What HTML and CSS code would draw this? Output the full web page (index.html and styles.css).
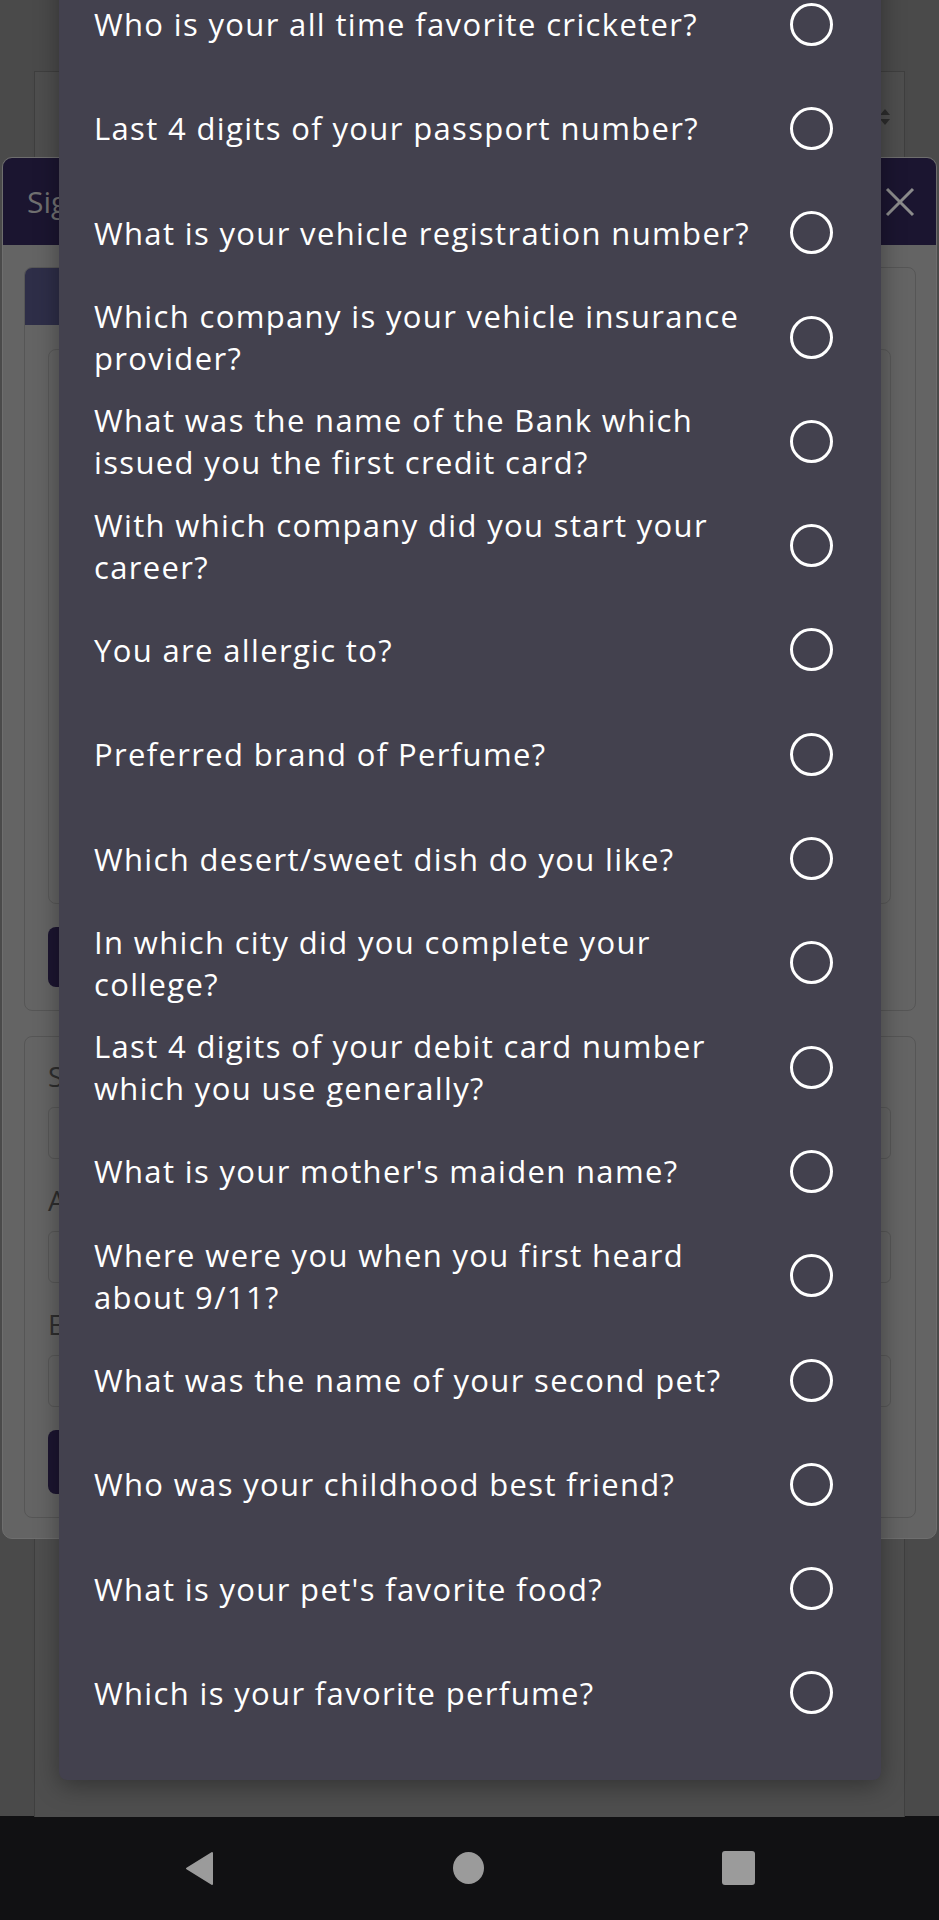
FILE: index.html
```html
<!DOCTYPE html>
<html lang="en">
<head>
    <meta charset="UTF-8">
    <meta name="viewport" content="width=device-width, initial-scale=1.0">
    <title>Security Questions</title>
    <link rel="stylesheet" href="styles.css">
</head>
<body>
    <div class="page">
        <div class="page-box">
            <span class="sort-arrows"><i class="up"></i><i class="down"></i></span>
        </div>
    </div>

    <div class="dialog">
        <div class="dialog-header">
            <span class="dialog-title">Sign Up</span>
            <svg class="close" width="30" height="30" viewBox="0 0 30 30">
                <path d="M2 2 L28 28 M28 2 L2 28" stroke="#8c8c8c" stroke-width="3" fill="none"/>
            </svg>
        </div>
        <div class="dialog-body">
            <div class="card">
                <div class="tabs">
                    <div class="tab active"></div>
                </div>
                <div class="card-inner">
                    <div class="question-box"></div>
                    <button class="btn"></button>
                </div>
            </div>
            <div class="card">
                <div class="card-inner">
                    <label class="field-label">Security Question</label>
                    <div class="input"></div>
                    <label class="field-label">Answer</label>
                    <div class="input"></div>
                    <label class="field-label">Email</label>
                    <div class="input"></div>
                    <button class="btn tall"></button>
                </div>
            </div>
        </div>
    </div>

    <div class="sheet">
        <ul class="question-list">
            <li><span class="q">Who is your all time favorite cricketer?</span><span class="radio"></span></li>
            <li><span class="q">Last 4 digits of your passport number?</span><span class="radio"></span></li>
            <li><span class="q">What is your vehicle registration number?</span><span class="radio"></span></li>
            <li><span class="q">Which company is your vehicle insurance<br>provider?</span><span class="radio"></span></li>
            <li><span class="q">What was the name of the Bank which<br>issued you the first credit card?</span><span class="radio"></span></li>
            <li><span class="q">With which company did you start your<br>career?</span><span class="radio"></span></li>
            <li><span class="q">You are allergic to?</span><span class="radio"></span></li>
            <li><span class="q">Preferred brand of Perfume?</span><span class="radio"></span></li>
            <li><span class="q">Which desert/sweet dish do you like?</span><span class="radio"></span></li>
            <li><span class="q">In which city did you complete your<br>college?</span><span class="radio"></span></li>
            <li><span class="q">Last 4 digits of your debit card number<br>which you use generally?</span><span class="radio"></span></li>
            <li><span class="q">What is your mother's maiden name?</span><span class="radio"></span></li>
            <li><span class="q">Where were you when you first heard<br>about 9/11?</span><span class="radio"></span></li>
            <li><span class="q">What was the name of your second pet?</span><span class="radio"></span></li>
            <li><span class="q">Who was your childhood best friend?</span><span class="radio"></span></li>
            <li><span class="q">What is your pet's favorite food?</span><span class="radio"></span></li>
            <li><span class="q">Which is your favorite perfume?</span><span class="radio"></span></li>
        </ul>
    </div>

    <div class="nav-bar">
        <svg width="31" height="35" viewBox="0 0 31 35">
            <path d="M28 2 L28 33 L3 17.5 Z" fill="#9b9b9b" stroke="#9b9b9b" stroke-width="2" stroke-linejoin="round"/>
        </svg>
        <svg width="31" height="32" viewBox="0 0 31 32">
            <ellipse cx="15.5" cy="16" rx="15.5" ry="16" fill="#9b9b9b"/>
        </svg>
        <svg width="33" height="34" viewBox="0 0 33 34">
            <rect x="0" y="0" width="33" height="34" rx="3" fill="#9b9b9b"/>
        </svg>
    </div>
</body>
</html>
```

FILE: styles.css
```css
body {
    margin: 0;
    padding: 0;
    width: 939px;
    height: 1920px;
    overflow: hidden;
    background-color: #4a4a4a;
    font-family: "Open Sans", "Noto Sans", sans-serif;
    position: relative;
}
.page {
    height: 1816px;
    padding: 71px 34px 0 34px;
    box-sizing: border-box;
}
.page-box {
    height: 100%;
    border: 1px solid #3f3f3f;
    border-bottom: none;
    background-color: #4e4e4e;
    position: relative;
}
.sort-arrows {
    position: absolute;
    left: 845px;
    top: 37px;
    display: flex;
    flex-direction: column;
    gap: 4px;
}
.sort-arrows i {
    display: block;
    width: 0;
    height: 0;
    border-left: 5px solid transparent;
    border-right: 5px solid transparent;
}
.sort-arrows .up {
    border-bottom: 6px solid #2c2c2c;
}
.sort-arrows .down {
    border-top: 6px solid #2c2c2c;
}

/* dimmed dialog behind the sheet */
.dialog {
    position: absolute;
    top: 157px;
    left: 2px;
    width: 935px;
    box-sizing: border-box;
    background-color: #646464;
    border: 1px solid #6e6e6e;
    border-radius: 10px;
    overflow: hidden;
}
.dialog-header {
    height: 87px;
    background-color: #1b1530;
    display: flex;
    align-items: center;
    justify-content: space-between;
    padding: 0 21px 0 24px;
}
.dialog-title {
    font-size: 30px;
    color: #707070;
}
.dialog-body {
    padding: 22px 20px 20px 21px;
}
.card {
    border: 1px solid #565656;
    border-radius: 8px;
    overflow: hidden;
}
.card + .card {
    margin-top: 25px;
}
.tabs {
    display: flex;
    height: 57px;
}
.tab {
    width: 300px;
    background-color: #2e2e48;
}
.card-inner {
    padding: 24px 24px 23px 23px;
}
.question-box {
    height: 555px;
    border: 1px solid #585858;
    border-radius: 8px;
    box-sizing: border-box;
}
.btn {
    display: block;
    width: 320px;
    height: 60px;
    margin-top: 23px;
    border: none;
    border-radius: 8px;
    background-color: #1c1530;
}
.btn.tall {
    height: 64px;
}
.field-label {
    display: block;
    font-size: 28px;
    line-height: 38px;
    color: #2e2e2e;
    margin: 22px 0 12px 0;
}
.card-inner .field-label:first-child {
    margin-top: -4px;
}
.input {
    height: 52px;
    border: 1px solid #575757;
    border-radius: 6px;
    box-sizing: border-box;
}

/* question picker sheet */
.sheet {
    position: absolute;
    left: 59px;
    top: -28px;
    width: 822px;
    background-color: #43414e;
    border-radius: 0 0 8px 8px;
    padding-bottom: 35px;
    box-shadow: 0 6px 24px rgba(0, 0, 0, 0.35);
}
.question-list {
    list-style: none;
    margin: 0;
    padding: 0;
}
.question-list li {
    height: 104.3px;
    display: flex;
    align-items: center;
    padding: 0 48px 0 35px;
}
.q {
    flex: 1;
    padding-right: 20px;
    font-size: 31px;
    letter-spacing: 1.35px;
    line-height: 42px;
    white-space: nowrap;
    color: #ffffff;
}
.radio {
    flex-shrink: 0;
    width: 43px;
    height: 43px;
    box-sizing: border-box;
    border: 3.5px solid #ffffff;
    border-radius: 50%;
}

.nav-bar {
    height: 104px;
    background-color: #111113;
    display: flex;
    align-items: center;
    justify-content: center;
    gap: 238px;
}
```
